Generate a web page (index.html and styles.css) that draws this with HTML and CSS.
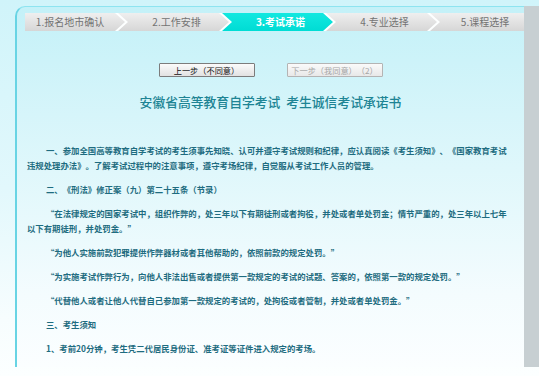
FILE: index.html
```html
<!DOCTYPE html>
<html lang="zh-CN">

<head>
    <title>考生诚信考试承诺书</title>
    <meta charset="UTF-8" />
    <meta name="viewport" content="width=device-width, initial-scale=1.0" />
    <link rel="stylesheet" href="styles.css">
</head>

<body>
    <div class="page">
        <section class="panel">
            <!-- registration steps -->
            <ol class="steps">
                <li class="step first">1.报名地市确认</li>
                <li class="step">2.工作安排</li>
                <li class="step active">3.考试承诺</li>
                <li class="step">4.专业选择</li>
                <li class="step last">5.课程选择</li>
            </ol>
            <div class="actions">
                <button type="button" id="prevButton">上一步（不同意）</button>
                <button type="button" id="nextButton" disabled>下一步（我同意）（2）</button>
            </div>
            <h1 class="title">安徽省高等教育自学考试 考生诚信考试承诺书</h1>
            <div class="pledge">
                <p>一、参加全国高等教育自学考试的考生须事先知晓、认可并遵守考试规则和纪律，应认真阅读《考生须知》、《国家教育考试违规处理办法》。了解考试过程中的注意事项，遵守考场纪律，自觉服从考试工作人员的管理。</p>
                <p>二、《刑法》修正案（九）第二十五条（节录）</p>
                <p>“在法律规定的国家考试中，组织作弊的，处三年以下有期徒刑或者拘役，并处或者单处罚金；情节严重的，处三年以上七年以下有期徒刑，并处罚金。”</p>
                <p>“为他人实施前款犯罪提供作弊器材或者其他帮助的，依照前款的规定处罚。”</p>
                <p>“为实施考试作弊行为，向他人非法出售或者提供第一款规定的考试的试题、答案的，依照第一款的规定处罚。”</p>
                <p>“代替他人或者让他人代替自己参加第一款规定的考试的，处拘役或者管制，并处或者单处罚金。”</p>
                <p>三、考生须知</p>
                <p>1、考前20分钟，考生凭二代居民身份证、准考证等证件进入规定的考场。</p>
            </div>
        </section>
        <div class="rail"></div>
    </div>
</body>

</html>
```

FILE: styles.css
```css
body {
    margin: 0;
    height: 376px;
    overflow: hidden;
    font-family: "Noto Sans CJK SC", sans-serif;
    text-spacing-trim: space-all;
    background: linear-gradient(to bottom, #d0f4fa 0, #e2f8fc 50%, #f7fdfe 85%, #fcffff 100%);
}

.page {
    display: flex;
    box-sizing: border-box;
    height: 367px;
    padding: 6px 0 0 15px;
}

.panel {
    flex: 1;
    min-width: 0;
    overflow: hidden;
    border-left: 2px solid #68d4e4;
    border-top: 1px solid #8ee4f0;
    border-top-left-radius: 10px;
    background: linear-gradient(to bottom, #c4f1f8 0, #dff7fb 45%, #f4fcfe 80%, #fbfeff 100%);
}

.rail {
    width: 15px;
    background-color: #c7cfd2;
}

/* step tabs */
.steps {
    display: flex;
    height: 18px;
    margin: 6px 0 0 8px;
    padding: 0;
    list-style: none;
    background-color: #fdffff;
}

.step {
    width: 111px;
    margin-left: -7px;
    padding-left: 6px;
    box-sizing: border-box;
    flex: none;
    font-size: 10px;
    line-height: 18px;
    text-align: center;
    color: #737373;
    background: linear-gradient(to bottom, #efefef, #d6d6d6);
    clip-path: polygon(0 0, calc(100% - 10px) 0, 100% 50%, calc(100% - 10px) 100%, 0 100%, 10px 50%);
}

.step.first {
    width: 100px;
    margin-left: 0;
    padding: 0 10px 0 0;
    clip-path: polygon(0 0, calc(100% - 10px) 0, 100% 50%, calc(100% - 10px) 100%, 0 100%);
}

.step.last {
    flex: 1;
    padding-left: 16px;
    clip-path: polygon(0 0, 100% 0, 100% 100%, 0 100%, 10px 50%);
}

.step.active {
    color: #fff;
    font-weight: bold;
    background: linear-gradient(to bottom, #12e8e0, #00dcd4);
}

.actions {
    display: flex;
    justify-content: center;
    gap: 32px;
    margin-top: 32px;
}

.actions button {
    width: 96px;
    height: 14px;
    padding: 0;
    font-family: inherit;
    font-size: 8.2px;
    line-height: 12px;
    color: #111;
    border: 1px solid #7c7c7c;
    border-radius: 1px;
    background: linear-gradient(to bottom, #fbfbfb, #e2e2e2);
}

.actions button:disabled {
    color: #a6a6a6;
    border-color: #b4b4b4;
    background: linear-gradient(to bottom, #fafafa, #e8e8e8);
}

.title {
    margin: 17px 0 0 0;
    font-size: 12.8px;
    line-height: 16px;
    font-weight: 500;
    word-spacing: 3px;
    text-align: center;
    color: #1d8494;
}

.pledge {
    margin-top: 33px;
    padding: 0 12px 0 10px;
}

.pledge p {
    margin: 0 0 9px 0;
    font-size: 8.4px;
    line-height: 15px;
    font-weight: bold;
    text-indent: 19px;
    color: #1e6c80;
}
```
